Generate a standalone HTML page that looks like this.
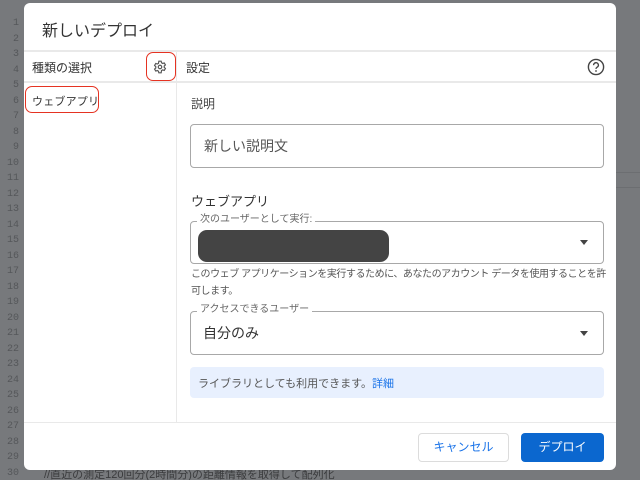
<!DOCTYPE html>
<html><head><meta charset="utf-8"><style>
*{margin:0;padding:0;box-sizing:border-box}
html,body{width:640px;height:480px;overflow:hidden}
body{background:#77797c;font-family:"Liberation Sans","Noto Sans CJK JP",sans-serif;position:relative;color:#333}
.ln{position:absolute;left:0;width:19px;text-align:right;font-family:"Liberation Mono",monospace;font-size:10px;line-height:12px;color:#55575a}
.a{position:absolute}
.dlg{position:absolute;left:24px;top:3px;width:592px;height:467px;background:#fff;border-radius:6px}
.hl{position:absolute;background:#e9e9e9}
.box{position:absolute;border:1px solid #a8a8a8;border-radius:4px}
.leg{position:absolute;background:#fff;font-size:10px;color:#666;padding:0 3px;line-height:12px}
.arr{position:absolute;width:0;height:0;border-left:4px solid transparent;border-right:4px solid transparent;border-top:5px solid #444}
</style></head><body>
<div class="ln" style="top:18px">1</div><div class="ln" style="top:34px">2</div><div class="ln" style="top:49px">3</div><div class="ln" style="top:65px">4</div><div class="ln" style="top:80px">5</div><div class="ln" style="top:96px">6</div><div class="ln" style="top:111px">7</div><div class="ln" style="top:127px">8</div><div class="ln" style="top:142px">9</div><div class="ln" style="top:158px">10</div><div class="ln" style="top:173px">11</div><div class="ln" style="top:189px">12</div><div class="ln" style="top:204px">13</div><div class="ln" style="top:220px">14</div><div class="ln" style="top:235px">15</div><div class="ln" style="top:251px">16</div><div class="ln" style="top:266px">17</div><div class="ln" style="top:282px">18</div><div class="ln" style="top:297px">19</div><div class="ln" style="top:313px">20</div><div class="ln" style="top:328px">21</div><div class="ln" style="top:344px">22</div><div class="ln" style="top:359px">23</div><div class="ln" style="top:375px">24</div><div class="ln" style="top:390px">25</div><div class="ln" style="top:406px">26</div><div class="ln" style="top:421px">27</div><div class="ln" style="top:437px">28</div><div class="ln" style="top:452px">29</div><div class="ln" style="top:468px">30</div>
<div class="a" style="left:44px;top:469px;font-size:11px;line-height:13px;color:#3a3b3d;white-space:nowrap">//直近の測定120回分(2時間分)の距離情報を取得して配列化</div>
<div class="a" style="left:616px;top:172px;width:24px;height:1px;background:#6c6e71"></div>
<div class="a" style="left:616px;top:187px;width:24px;height:1px;background:#6c6e71"></div>

<div class="dlg"></div>
<div class="a" style="left:42px;top:17px;font-size:16px;color:#333">新しいデプロイ</div>
<div class="hl" style="left:24px;top:50px;width:592px;height:2px"></div>
<div class="hl" style="left:24px;top:81px;width:592px;height:2px"></div>
<div class="hl" style="left:176px;top:52px;width:1px;height:371px"></div>
<div class="hl" style="left:24px;top:422px;width:592px;height:1px"></div>

<div class="a" style="left:32px;top:59px;font-size:12px;color:#333">種類の選択</div>
<div class="a" style="left:146px;top:52px;width:30px;height:29px;border:1.5px solid #e53322;border-radius:7px"></div>
<svg class="a" style="left:153px;top:60px" width="14" height="14" viewBox="0 0 24 24"><path fill="none" stroke="#555" stroke-width="2" d="M10 2h4l.6 2.8 2 1.1 2.7-.9 2 3.4-2.1 1.9v2.3l2.1 1.9-2 3.4-2.7-.9-2 1.1L14 22h-4l-.6-2.8-2-1.1-2.7.9-2-3.4 2.1-1.9v-2.3L2.7 9.4l2-3.4 2.7.9 2-1.1z"/><circle cx="12" cy="12" r="3" fill="none" stroke="#555" stroke-width="2"/></svg>
<div class="a" style="left:186px;top:59px;font-size:12px;color:#333">設定</div>
<svg class="a" style="left:587px;top:58px" width="18" height="18" viewBox="0 0 18 18"><circle cx="9" cy="9" r="7.6" fill="none" stroke="#444" stroke-width="1.4"/><path d="M6.6 7.2a2.4 2.4 0 1 1 3.4 2.1c-.7.4-1 .8-1 1.6" fill="none" stroke="#444" stroke-width="1.4"/><circle cx="9" cy="13" r=".9" fill="#444"/></svg>

<div class="a" style="left:25px;top:86px;width:74px;height:27px;border:1.5px solid #e53322;border-radius:7px"></div>
<div class="a" style="left:32px;top:93px;font-size:11px;color:#333;letter-spacing:0.2px">ウェブアプリ</div>

<div class="a" style="left:191px;top:95px;font-size:12px;color:#444">説明</div>
<div class="box" style="left:190px;top:124px;width:414px;height:44px"></div>
<div class="a" style="left:204px;top:136px;font-size:14px;color:#555">新しい説明文</div>

<div class="a" style="left:191px;top:191px;font-size:13px;color:#333">ウェブアプリ</div>
<div class="box" style="left:190px;top:221px;width:414px;height:43px"></div>
<div class="leg" style="left:197px;top:214px">次のユーザーとして実行:</div>
<div class="a" style="left:198px;top:230px;width:191px;height:32px;background:#444;border-radius:9px"></div>
<div class="arr" style="left:580px;top:240px"></div>
<div class="a" style="left:191px;top:266px;font-size:10px;line-height:17px;color:#555;white-space:nowrap;letter-spacing:-0.45px">このウェブ アプリケーションを実行するために、あなたのアカウント データを使用することを許<br>可します。</div>

<div class="box" style="left:190px;top:311px;width:414px;height:44px"></div>
<div class="leg" style="left:197px;top:304px">アクセスできるユーザー</div>
<div class="a" style="left:203px;top:323px;font-size:14px;color:#333">自分のみ</div>
<div class="arr" style="left:580px;top:331px"></div>

<div class="a" style="left:190px;top:367px;width:414px;height:31px;background:#e8f0fe;border-radius:4px"></div>
<div class="a" style="left:198px;top:375px;font-size:11px;color:#555">ライブラリとしても利用できます。<span style="color:#1a73e8">詳細</span></div>

<div class="a" style="left:418px;top:433px;width:91px;height:29px;border:1px solid #dcdcdc;border-radius:4px;font-size:12px;color:#1a73e8;text-align:center;line-height:27px">キャンセル</div>
<div class="a" style="left:521px;top:433px;width:83px;height:29px;background:#0b67cf;border-radius:4px;font-size:12px;color:#fff;text-align:center;line-height:29px">デプロイ</div>
</body></html>
